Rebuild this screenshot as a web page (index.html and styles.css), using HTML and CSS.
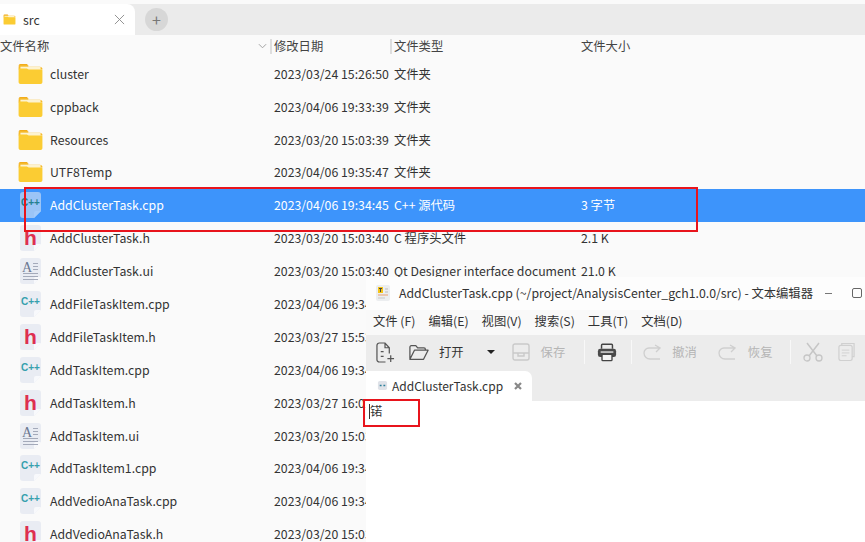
FILE: index.html
```html
<!DOCTYPE html>
<html lang="zh-CN">
<head>
    <meta charset="UTF-8">
    <title>src</title>
    <link rel="stylesheet" href="styles.css">
</head>
<body>
    <svg class="defs" width="0" height="0">
        <symbol id="folder" viewBox="0 0 28 24">
            <path d="M1 3a2 2 0 0 1 2-2h7l2 2h-11z" fill="#f0a818"/>
            <path d="M1 4a2 2 0 0 1 2-2h7l2 2h12a3 3 0 0 1 3 2v1h-26z" fill="#f5b92a"/>
            <rect x="3" y="4" width="22" height="4" fill="#fdf3d0"/>
            <path d="M1 7a1 1 0 0 1 1-1h8l2 1h14a1 1 0 0 1 1 1v13a2 2 0 0 1-2 2h-22a2 2 0 0 1-2-2z" fill="#fbcc33"/>
        </symbol>
        <symbol id="page" viewBox="0 0 21 26">
            <path d="M3 0h15a3 3 0 0 1 3 3v16l-7 7h-11a3 3 0 0 1-3-3v-20a3 3 0 0 1 3-3z" fill="#e9ecf3"/>
            <path d="M21 19h-5a2 2 0 0 0-2 2v5z" fill="#f8f9fc"/>
        </symbol>
        <symbol id="undo" viewBox="0 0 18 16">
            <path d="M17 15H7a6 6 0 0 1-6-6 5 5 0 0 1 5-5h10M12 1l5 3-4 4" stroke="#cfcfcf" stroke-width="1.300" fill="none"/>
        </symbol>
    </svg>

    <div class="tabbar">
        <div class="tab">
            <svg class="tab-folder"><use href="#folder"/></svg>
            <span class="tab-name">src</span>
            <svg class="tab-close" viewBox="0 0 12 12"><path d="M1 1l10 10M11 1l-10 10" stroke="#8a8a8a" stroke-width="1" fill="none"/></svg>
        </div>
        <div class="tab-add">+</div>
    </div>

    <div class="header">
        <div class="head-name">文件名称<svg class="sort" viewBox="0 0 10 6"><path d="M1 1l4 4 4-4" stroke="#999" fill="none"/></svg></div>
        <div class="head-cell">修改日期</div>
        <div class="head-cell">文件类型</div>
        <div class="head-plain">文件大小</div>
    </div>

    <div class="list">
        <div class="row"><svg class="ico-folder"><use href="#folder"/></svg><span>cluster</span><span>2023/03/24 15:26:50</span><span>文件夹</span><span></span></div>
        <div class="row"><svg class="ico-folder"><use href="#folder"/></svg><span>cppback</span><span>2023/04/06 19:33:39</span><span>文件夹</span><span></span></div>
        <div class="row"><svg class="ico-folder"><use href="#folder"/></svg><span>Resources</span><span>2023/03/20 15:03:39</span><span>文件夹</span><span></span></div>
        <div class="row"><svg class="ico-folder"><use href="#folder"/></svg><span>UTF8Temp</span><span>2023/04/06 19:35:47</span><span>文件夹</span><span></span></div>
        <div class="row selected"><div class="file cpp"><svg><use href="#page"/></svg><b>C++</b></div><span>AddClusterTask.cpp</span><span>2023/04/06 19:34:45</span><span>C++ 源代码</span><span>3 字节</span></div>
        <div class="row"><div class="file hdr"><svg><use href="#page"/></svg><b>h</b></div><span>AddClusterTask.h</span><span>2023/03/20 15:03:40</span><span>C 程序头文件</span><span>2.1 K</span></div>
        <div class="row"><div class="file ui"><svg><use href="#page"/></svg><b>A</b><i></i></div><span>AddClusterTask.ui</span><span>2023/03/20 15:03:40</span><span>Qt Designer interface document</span><span>21.0 K</span></div>
        <div class="row"><div class="file cpp"><svg><use href="#page"/></svg><b>C++</b></div><span>AddFileTaskItem.cpp</span><span>2023/04/06 19:34:45</span><span></span><span></span></div>
        <div class="row"><div class="file hdr"><svg><use href="#page"/></svg><b>h</b></div><span>AddFileTaskItem.h</span><span>2023/03/27 15:53:10</span><span></span><span></span></div>
        <div class="row"><div class="file cpp"><svg><use href="#page"/></svg><b>C++</b></div><span>AddTaskItem.cpp</span><span>2023/04/06 19:34:45</span><span></span><span></span></div>
        <div class="row"><div class="file hdr"><svg><use href="#page"/></svg><b>h</b></div><span>AddTaskItem.h</span><span>2023/03/27 16:01:22</span><span></span><span></span></div>
        <div class="row"><div class="file ui"><svg><use href="#page"/></svg><b>A</b><i></i></div><span>AddTaskItem.ui</span><span>2023/03/20 15:03:40</span><span></span><span></span></div>
        <div class="row"><div class="file cpp"><svg><use href="#page"/></svg><b>C++</b></div><span>AddTaskItem1.cpp</span><span>2023/04/06 19:34:45</span><span></span><span></span></div>
        <div class="row"><div class="file cpp"><svg><use href="#page"/></svg><b>C++</b></div><span>AddVedioAnaTask.cpp</span><span>2023/04/06 19:34:45</span><span></span><span></span></div>
        <div class="row"><div class="file hdr"><svg><use href="#page"/></svg><b>h</b></div><span>AddVedioAnaTask.h</span><span>2023/03/20 15:03:40</span><span></span><span></span></div>
    </div>

    <div class="mark mark-row"></div>

    <div class="editor">
        <div class="titlebar">
            <svg class="app-ico" viewBox="0 0 16 18"><rect x="1" y="1" width="14" height="16" rx="2" fill="#eceef0"/><rect x="3" y="3" width="5" height="6" fill="#f5c518"/><path d="M4 4.500h3M5.500 4.500v3.500" stroke="#444" fill="none"/><path d="M10 5h3M10 8h3" stroke="#bbb" fill="none"/><path d="M3 11h10" stroke="#e8a070" fill="none"/><path d="M3 14h7" stroke="#c8c8c8" fill="none"/></svg>
            <span class="title">AddClusterTask.cpp (~/project/AnalysisCenter_gch1.0.0/src) - 文本编辑器</span>
            <span class="win-min"></span>
            <span class="win-max"></span>
        </div>
        <div class="menubar">
            <span class="menu-file">文件 (F)</span><span class="menu-edit">编辑(E)</span><span class="menu-view">视图(V)</span><span class="menu-find">搜索(S)</span><span class="menu-tool">工具(T)</span><span class="menu-doc">文档(D)</span>
        </div>
        <div class="toolbar">
            <svg class="tool tool-new" viewBox="0 0 20 22"><path d="M14 12V6L9.500 1H3.500a2.500 2.500 0 0 0-2.500 2.500v15a2.500 2.500 0 0 0 2.500 2.500H10M9.500 1v5H14M5 10h3M5 15h3M15.500 14v7M12 17.500h7" stroke="#555" stroke-width="1.300" fill="none"/></svg>
            <svg class="tool tool-open" viewBox="0 0 22 18"><path d="M1 16V3a1.500 1.500 0 0 1 1.500-1.500h5l2 2.500h7a1.500 1.500 0 0 1 1.500 1.500v1.500M1 16.500h15l5-10h-15z" stroke="#555" stroke-width="1.400" fill="none" stroke-linejoin="round"/></svg>
            <span class="tool-label open-label">打开</span>
            <span class="caret"></span>
            <svg class="tool tool-save" viewBox="0 0 18 18"><rect x="1" y="1" width="16" height="16" rx="2" stroke="#c9c9c9" stroke-width="1.400" fill="none"/><path d="M1 10h16M6 10v3h6v-3" stroke="#c9c9c9" stroke-width="1.400" fill="none"/></svg>
            <span class="tool-label off save-label">保存</span>
            <span class="sep"></span>
            <svg class="tool tool-print" viewBox="0 0 22 20"><path d="M5 6V2a1 1 0 0 1 1-1h10a1 1 0 0 1 1 1v4" stroke="#444" stroke-width="1.600" fill="none"/><rect x="1" y="6" width="20" height="9" rx="2.500" fill="#4a4a4a"/><path d="M4 9.500h14" stroke="#e6e6e6" stroke-width="1.500"/><rect x="5.500" y="12" width="11" height="7" rx="1" fill="#f4f4f4" stroke="#444" stroke-width="1.500"/></svg>
            <span class="sep"></span>
            <svg class="tool tool-undo"><use href="#undo"/></svg>
            <span class="tool-label off undo-label">撤消</span>
            <svg class="tool tool-undo"><use href="#undo"/></svg>
            <span class="tool-label off redo-label">恢复</span>
            <span class="sep"></span>
            <svg class="tool tool-cut" viewBox="0 0 20 20"><circle cx="4" cy="16" r="3" stroke="#c6c6c6" stroke-width="1.300" fill="none"/><circle cx="16" cy="16" r="3" stroke="#c6c6c6" stroke-width="1.300" fill="none"/><path d="M6 14L16 1M14 14L4 1" stroke="#c6c6c6" stroke-width="1.500" fill="none"/></svg>
            <svg class="tool tool-copy" viewBox="0 0 18 20"><path d="M4 3V1h13v14h-2" stroke="#d0d0d0" stroke-width="1.300" fill="none"/><rect x="1" y="3" width="14" height="16" rx="2" stroke="#d0d0d0" stroke-width="1.300" fill="none"/><path d="M4 8h8M4 11h8M4 14h5" stroke="#d0d0d0" fill="none"/></svg>
        </div>
        <div class="docbar">
            <div class="doctab">
                <svg class="doc-ico" viewBox="0 0 12 12"><rect x="1" y="1" width="10" height="10" rx="2" fill="#dfe2e8"/><path d="M3 6h2M7 6h2" stroke="#2a7f9a" stroke-width="1.500"/></svg>
                <span class="doc-name">AddClusterTask.cpp</span>
                <svg class="doc-close" viewBox="0 0 10 10"><path d="M2 2l6 6M8 2l-6 6" stroke="#888" stroke-width="2.200" fill="none"/></svg>
            </div>
        </div>
        <div class="content"><span class="caret-line"></span>锘</div>
        <div class="mark mark-text"></div>
    </div>
</body>
</html>
```

FILE: styles.css
```css
html, body {
    margin: 0;
    padding: 0;
}
body {
    width: 865px;
    height: 542px;
    overflow: hidden;
    position: relative;
    background-color: #fafafa;
    font-family: "Noto Sans CJK SC", "Noto Sans", sans-serif;
    font-size: 12.3px;
    color: #333;
}
.defs {
    position: absolute;
}

/* file manager */
.tabbar {
    height: 31px;
    margin-top: 4px;
    background-color: #ebebeb;
    display: flex;
    align-items: center;
}
.tab {
    width: 135px;
    height: 31px;
    background-color: #fff;
    border-radius: 0 8px 0 0;
    display: flex;
    align-items: center;
}
.tab-folder {
    width: 13px;
    height: 11px;
    margin-left: 3px;
}
.tab-name {
    margin-left: 7px;
    flex: 1;
}
.tab-close {
    width: 11px;
    height: 11px;
    margin-right: 10px;
}
.tab-add {
    width: 23px;
    height: 23px;
    margin-left: 10px;
    border-radius: 50%;
    background-color: #d7d7d7;
    color: #777;
    font-size: 16px;
    line-height: 22px;
    text-align: center;
}
.header {
    height: 22.3px;
    display: grid;
    grid-template-columns: 270px 120px 187px 1fr;
    align-items: center;
    color: #444;
}
.head-name {
    display: flex;
    align-items: center;
    justify-content: space-between;
    padding-right: 3px;
}
.sort {
    width: 9px;
    height: 6px;
}
.head-cell {
    border-left: 2px solid #dedede;
    height: 15px;
    line-height: 15px;
    padding-left: 2px;
}
.head-plain {
    padding-left: 4px;
}
.row {
    height: 32.9px;
    display: grid;
    grid-template-columns: 50px 224px 120px 187px 1fr;
    align-items: center;
    white-space: nowrap;
}
.row.selected {
    background-color: #3d94fb;
    color: #fff;
}
.ico-folder {
    width: 27px;
    height: 22px;
    margin-left: 17px;
}
.file {
    position: relative;
    width: 21px;
    height: 26px;
    margin-left: 20px;
}
.file svg {
    width: 21px;
    height: 26px;
    display: block;
}
.selected .file svg {
    opacity: 0.55;
}
.file b {
    position: absolute;
    left: 0;
    right: 0;
    text-align: center;
    font-family: "Liberation Sans", sans-serif;
}
.cpp b {
    top: 4px;
    line-height: 14px;
    font-size: 10px;
    color: #35a0ad;
}
.selected .cpp b {
    color: #24808f;
}
.hdr b {
    top: 3px;
    line-height: 20px;
    font-size: 21px;
    color: #de2f50;
}
.ui b {
    top: 3px;
    padding-left: 2px;
    line-height: 13px;
    font-family: "Liberation Serif", serif;
    font-size: 14px;
    font-weight: normal;
    color: #6b7892;
    text-align: left;
}
.ui i {
    position: absolute;
    left: 13px;
    top: 5px;
    width: 5px;
    height: 8px;
    background: repeating-linear-gradient(#a4aaba 0 1px, transparent 1px 3px);
}
.ui i::after {
    content: "";
    position: absolute;
    left: -10px;
    top: 10px;
    width: 15px;
    height: 7px;
    background: repeating-linear-gradient(#a4aaba 0 1px, transparent 1px 3px);
}

/* red annotation boxes */
.mark {
    position: absolute;
    box-sizing: border-box;
    border: 2px solid #e8141c;
}
.mark-row {
    left: 24px;
    top: 187px;
    width: 674px;
    height: 45px;
}
.mark-text {
    left: -3px;
    top: 122px;
    width: 57px;
    height: 28px;
}

/* text editor window, over the file manager */
.editor {
    position: absolute;
    left: 366px;
    top: 277px;
    width: 499px;
    height: 265px;
    background-color: #fff;
}
.titlebar {
    height: 33px;
    padding-bottom: 1px;
    box-sizing: border-box;
    background-color: #fdfdfd;
    display: flex;
    align-items: center;
}
.app-ico {
    width: 16px;
    height: 18px;
    margin-left: 9px;
    flex: none;
}
.title {
    margin-left: 8px;
    white-space: nowrap;
}
.win-min {
    width: 7px;
    height: 1px;
    margin-left: 12px;
    background-color: #777;
    flex: none;
}
.win-max {
    width: 8px;
    height: 8px;
    margin-left: 20px;
    border: 1px solid #666;
    border-radius: 2px;
    flex: none;
}
.menubar {
    height: 25px;
    padding: 0 0 3px 7px;
    box-sizing: border-box;
    background-color: #f9f9f9;
    display: flex;
    align-items: center;
}
.menu-edit, .menu-view, .menu-find, .menu-tool, .menu-doc {
    margin-left: 13px;
}
.toolbar {
    height: 36px;
    padding-bottom: 2px;
    box-sizing: border-box;
    background-color: #ececec;
    display: flex;
    align-items: center;
}
.tool {
    flex: none;
}
.tool-new {
    width: 19px;
    height: 21px;
    margin-left: 10px;
}
.tool-open {
    width: 20px;
    height: 17px;
    margin-left: 14px;
}
.tool-label {
    color: #333;
    flex: none;
}
.tool-label.off {
    color: #b5b5b5;
}
.open-label {
    margin-left: 10px;
}
.caret {
    width: 0;
    height: 0;
    margin-left: 23px;
    border: 4px solid transparent;
    border-top: 4px solid #222;
    border-bottom: none;
}
.tool-save {
    width: 18px;
    height: 18px;
    margin-left: 17px;
}
.save-label {
    margin-left: 11px;
}
.sep {
    width: 1px;
    height: 24px;
    background-color: #f8f8f8;
    flex: none;
}
.save-label + .sep {
    margin-left: 19px;
}
.tool-print {
    width: 20px;
    height: 19px;
    margin-left: 12px;
}
.tool-print + .sep {
    margin-left: 14px;
}
.tool-undo {
    width: 18px;
    height: 16px;
    margin-left: 11px;
}
.undo-label {
    margin-left: 11px;
}
.undo-label + .tool-undo {
    margin-left: 21px;
}
.redo-label {
    margin-left: 12px;
}
.redo-label + .sep {
    margin-left: 18px;
}
.tool-cut {
    width: 20px;
    height: 20px;
    margin-left: 12px;
}
.tool-copy {
    width: 17px;
    height: 20px;
    margin-left: 15px;
}
.docbar {
    height: 30px;
    background-color: #ececec;
}
.doctab {
    width: 166px;
    height: 30px;
    padding-bottom: 1px;
    box-sizing: border-box;
    background-color: #fff;
    border-radius: 0 7px 0 0;
    display: flex;
    align-items: center;
}
.doc-ico {
    width: 11px;
    height: 11px;
    margin-left: 11px;
}
.doc-name {
    margin-left: 4px;
    font-size: 12px;
    flex: 1;
}
.doc-close {
    width: 10px;
    height: 10px;
    margin-right: 9px;
}
.content {
    padding-left: 3px;
    line-height: 20px;
    display: flex;
    align-items: center;
    height: 20px;
}
.caret-line {
    width: 1px;
    height: 15px;
    background-color: #333;
}
```
